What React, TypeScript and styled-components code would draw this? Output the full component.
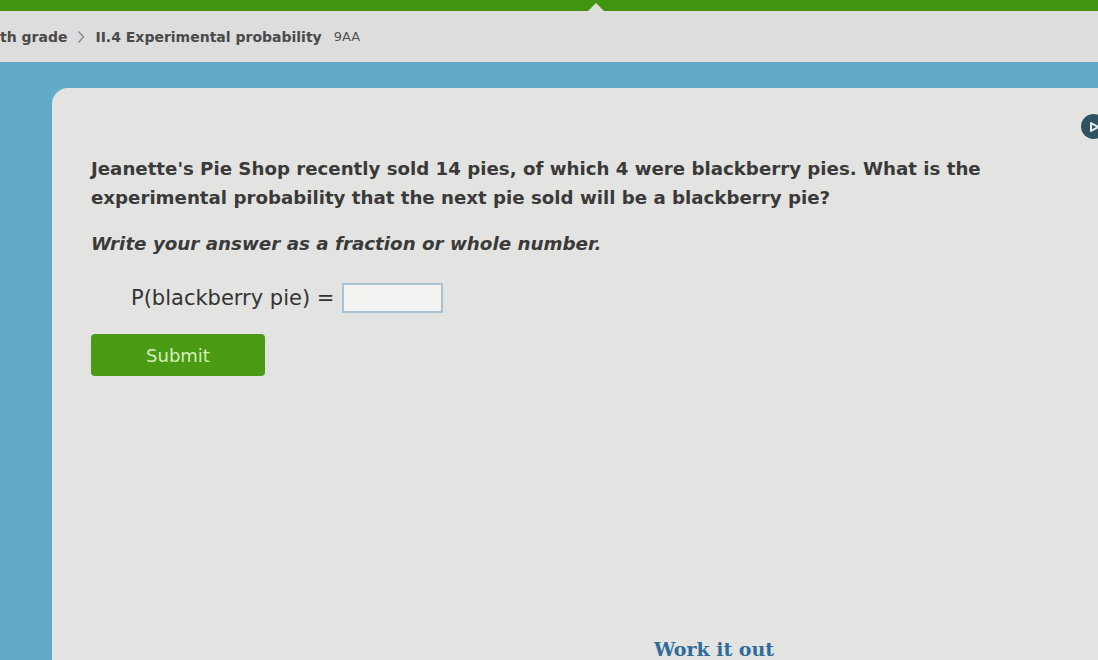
import React, { useState } from "react";
import styled, { createGlobalStyle } from "styled-components";

const GlobalStyle = createGlobalStyle`
  html, body {
    margin: 0;
    padding: 0;
    height: 100%;
    overflow: hidden;
    background: #63a9c8;
  }
  #root {
    height: 100%;
  }
`;

const Page = styled.div`
  width: 1098px;
  height: 660px;
  display: flex;
  flex-direction: column;
  font-family: "DejaVu Sans", "Open Sans", sans-serif;
  overflow: hidden;
`;

const TopStrip = styled.div`
  position: relative;
  height: 11px;
  background: #3f9410;
  flex-shrink: 0;
`;

const Notch = styled.div`
  position: absolute;
  left: 588px;
  bottom: 0;
  width: 0;
  height: 0;
  border-left: 8px solid transparent;
  border-right: 8px solid transparent;
  border-bottom: 8px solid #dedede;
`;

const Crumbs = styled.nav`
  height: 51px;
  flex-shrink: 0;
  background: #dddddd;
  display: flex;
  align-items: center;
  font-size: 14px;
  font-weight: 700;
  color: #4a4a4a;
`;

const Chevron = styled.svg`
  margin: 0 10px 0 10px;
  flex-shrink: 0;
`;

const SkillCode = styled.span`
  margin-left: 12px;
  font-size: 13px;
  font-weight: 400;
  color: #555;
`;

const Stage = styled.div`
  flex: 1;
  background: #63a9c8;
  padding: 26px 0 0 52px;
  display: flex;
`;

const Card = styled.section`
  position: relative;
  flex: 1;
  background: #e3e3e1;
  border-radius: 16px 0 0 0;
  padding: 66px 0 0 39px;
  color: #3a3a3a;
`;

const PlayBadge = styled.div`
  position: absolute;
  top: 26px;
  right: -8px;
  width: 25px;
  height: 25px;
  border-radius: 50%;
  background: #2f5262;
  display: flex;
  align-items: center;
  justify-content: center;
`;

const Question = styled.p`
  margin: 0;
  font-size: 18.2px;
  font-weight: 700;
  line-height: 29px;
  max-width: 910px;
`;

const Hint = styled.p`
  margin: 17px 0 0;
  font-size: 18.3px;
  font-weight: 700;
  font-style: italic;
  line-height: 29px;
`;

const AnswerRow = styled.div`
  display: flex;
  align-items: center;
  gap: 8px;
  margin: 25px 0 0 40px;
  font-size: 21px;
  color: #333;
`;

const AnswerBox = styled.input`
  width: 97px;
  height: 26px;
  box-sizing: content-box;
  border: 2px solid #a9c1d2;
  background: #f2f2f0;
  outline: none;
  padding: 0;
`;

const SubmitButton = styled.button`
  margin-top: 21px;
  width: 174px;
  height: 42px;
  border: none;
  border-radius: 4px;
  background: #4a9a14;
  color: #d5f0b8;
  font-family: "DejaVu Sans", sans-serif;
  font-size: 18px;
  font-weight: 400;
  cursor: pointer;
`;

const WorkItOut = styled.h2`
  position: absolute;
  left: 602px;
  top: 550px;
  margin: 0;
  font-family: "DejaVu Serif", serif;
  font-size: 19px;
  font-weight: 700;
  color: #2f6c99;
`;

export default function App() {
  const [answer, setAnswer] = useState("");

  return (
    <Page>
      <GlobalStyle />
      <TopStrip>
        <Notch />
      </TopStrip>
      <Crumbs>
        <span>th grade</span>
        <Chevron width="8" height="14" viewBox="0 0 8 14">
          <path
            d="M1.5 1.5 L6.5 7 L1.5 12.5"
            fill="none"
            stroke="#8c8c8c"
            strokeWidth="1.4"
          />
        </Chevron>
        <span>II.4 Experimental probability</span>
        <SkillCode>9AA</SkillCode>
      </Crumbs>
      <Stage>
        <Card>
          <PlayBadge>
            <svg width="12" height="12" viewBox="0 0 12 12">
              <path
                d="M3 2 L10 6 L3 10 Z"
                fill="none"
                stroke="#e8eef0"
                strokeWidth="2"
                strokeLinejoin="round"
              />
            </svg>
          </PlayBadge>
          <Question>
            Jeanette's Pie Shop recently sold 14 pies, of which 4 were
            blackberry pies. What is the experimental probability that the
            next pie sold will be a blackberry pie?
          </Question>
          <Hint>Write your answer as a fraction or whole number.</Hint>
          <AnswerRow>
            <span>P(blackberry pie) =</span>
            <AnswerBox
              value={answer}
              onChange={(e) => setAnswer(e.target.value)}
            />
          </AnswerRow>
          <SubmitButton>Submit</SubmitButton>
          <WorkItOut>Work it out</WorkItOut>
        </Card>
      </Stage>
    </Page>
  );
}
